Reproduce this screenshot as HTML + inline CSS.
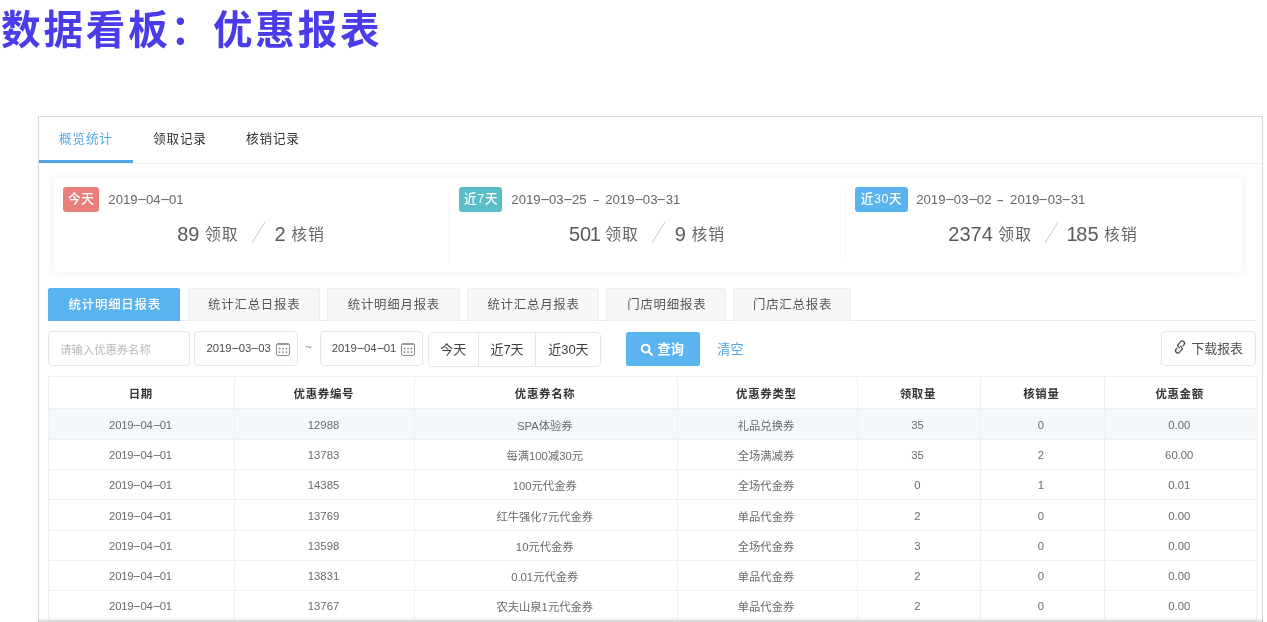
<!DOCTYPE html>
<html lang="zh-CN">
<head>
<meta charset="utf-8">
<title>数据看板：优惠报表</title>
<style>
*{box-sizing:border-box;margin:0;padding:0}
html,body{width:1267px;height:622px;overflow:hidden;background:#fff}
body{position:relative;font-family:"Liberation Sans","Noto Sans CJK SC",sans-serif;color:#666}
#root{position:absolute;left:0;top:0;width:1267px;height:622px;will-change:transform;transform:translateZ(0);filter:blur(.35px)}
i{font-style:normal;display:inline-block;width:.63em;text-align:center;transform:translateY(-.05em) scaleX(2.3)}
b.sp{font-weight:400;display:inline-block;width:18.6px;text-align:center;transform:scaleX(1.7)}
h1{position:absolute;left:1px;top:0;font-size:39.6px;line-height:60px;font-weight:700;color:#4b3ce9;white-space:nowrap;letter-spacing:2.8px}
.panel{position:absolute;left:37.5px;top:116.2px;width:1225.5px;height:520px;border:1px solid #d9d9d9;background:#fff}
.tabhead{position:absolute;left:38.5px;top:117px;width:1223.5px;height:47px;border-bottom:1px solid #f1f1f1}
.tab{position:absolute;top:117px;height:46px;line-height:45.4px;font-size:12.6px;letter-spacing:.8px;text-indent:.8px;color:#333;text-align:center;white-space:nowrap}
.tab.on{color:#52a9e6}
.ink{position:absolute;left:38.5px;top:160.1px;width:94.7px;height:3.3px;background:#4fa6e2}
.card{position:absolute;left:53.5px;top:177.5px;width:1188.5px;height:94.3px;background:#fff;border-radius:3px;box-shadow:0 0 10px rgba(0,0,0,.075)}
.vsep{position:absolute;top:189px;height:73px;width:0;border-left:1px dotted #f0f0f0}
.badge{position:absolute;top:187.3px;height:24.6px;line-height:24.2px;border-radius:3px;color:#fff;font-size:12.6px;letter-spacing:.6px;text-indent:.6px;font-weight:500;text-align:center;white-space:nowrap}
.odate{position:absolute;top:187px;height:25px;line-height:25px;font-size:13.19px;color:#666;white-space:nowrap}
.big{position:absolute;top:211px;height:36px;line-height:36px;width:396px;text-align:center;white-space:nowrap;font-size:20px;color:#5a5a5a}
.big .c{font-size:15.8px;letter-spacing:1px;color:#666;position:relative;top:-1px}
.big .s{display:inline-block;width:15px;margin:0 7.5px 0 13.5px;text-align:center;font-family:"Noto Sans CJK SC",sans-serif;font-weight:300;font-size:22px;line-height:36px;color:#cfcfcf;transform:skewX(-16deg);vertical-align:2px}
.big u{text-decoration:none;margin:0 -1.4px}
.bfade{position:absolute;left:38px;top:617px;width:1224.5px;height:5px;background:linear-gradient(to bottom,rgba(0,0,0,0),rgba(0,0,0,.05) 50%,rgba(0,0,0,.16))}
.stline{position:absolute;left:48px;top:320px;width:1208px;height:1px;background:#ececec}
.st{position:absolute;top:288.2px;height:32.6px;line-height:33.6px;font-size:12.4px;letter-spacing:.8px;text-indent:.8px;color:#555;text-align:center;background:#f7f7f7;border:1px solid #eee;border-radius:2px 2px 0 0;white-space:nowrap}
.st.on{background:#58b3ee;border-color:#58b3ee;color:#fff;font-weight:500}
.inp{position:absolute;top:331.2px;height:35px;line-height:33.6px;border:1px solid #e6e6e6;border-radius:4px;background:#fff;white-space:nowrap}
.ph{font-size:11.3px;color:#b9b9b9;padding-left:11px;line-height:37.2px}
.dt{font-size:11.3px;color:#4a4a4a;padding-left:11.2px}
.dt svg{position:absolute;right:7.3px;top:10.6px}
.tilde{position:absolute;left:301px;top:331px;width:15px;height:35px;line-height:33px;text-align:center;font-size:12px;color:#999}
.bg{position:absolute;top:331.5px;height:35px;line-height:34.8px;border:1px solid #e8e8e8;background:#fff;font-size:13px;color:#3e3e3e;text-align:center;white-space:nowrap}
.q{position:absolute;left:625.5px;top:332.2px;width:74px;height:34.2px;line-height:36px;background:#5ab4f0;border-radius:2.5px;color:#fff;font-size:13.19px;font-weight:700;white-space:nowrap}
.q svg{position:absolute;left:14.6px;top:11.2px}
.q span{position:absolute;left:32px;top:0}
.clr{position:absolute;left:717.3px;top:332px;height:35px;line-height:36.8px;font-size:13.19px;color:#52a8e8;white-space:nowrap}
.dl{position:absolute;left:1161px;top:331px;width:94.7px;height:34.6px;line-height:34px;border:1px solid #e6e6e6;border-radius:4px;font-size:12.9px;color:#505050;white-space:nowrap;background:#fff}
.dl svg{position:absolute;left:10.55px;top:7.1px}
.dl span{position:absolute;left:29.4px;top:0}
table{position:absolute;left:48px;top:376px;width:1208px;border-collapse:collapse;table-layout:fixed;font-size:11.3px;color:#6a6a6a}
th,td{border:1px solid #f0f0f0;text-align:center;padding:0 2px 0 0;white-space:nowrap;overflow:hidden}
th{height:32px;font-size:11.4px;letter-spacing:.7px;text-indent:.7px;font-weight:700;color:#333;background:#fff}
td{height:30.1px;padding-top:1px}
tr.hv td{height:31.3px}
td .d{letter-spacing:-.2px}
tr.hv td{background:#f4f8fb}
</style>
</head>
<body>
<div id="root">
<h1>数据看板：优惠报表</h1>
<div class="panel"></div>
<div class="tabhead"></div>
<div class="tab on" style="left:38px;width:95px">概览统计</div>
<div class="tab" style="left:133px;width:93px">领取记录</div>
<div class="tab" style="left:226px;width:93px">核销记录</div>
<div class="ink"></div>

<div class="card"></div>
<div class="vsep" style="left:448px"></div>
<div class="vsep" style="left:845px"></div>

<div class="badge" style="left:63px;width:36px;background:#e87f7a">今天</div>
<div class="odate" style="left:108.3px"><span class="d">2019<i>-</i>04<i>-</i>01</span></div>
<div class="big" style="left:53px">89 <span class="c">领取</span><span class="s">/</span>2 <span class="c">核销</span></div>

<div class="badge" style="left:459.3px;width:43px;background:#59bec7">近7天</div>
<div class="odate" style="left:511.3px"><span class="d">2019<i>-</i>03<i>-</i>25</span><b class="sp">-</b><span class="d">2019<i>-</i>03<i>-</i>31</span></div>
<div class="big" style="left:449px">50<u>1</u> <span class="c">领取</span><span class="s">/</span>9 <span class="c">核销</span></div>

<div class="badge" style="left:854.8px;width:52.8px;background:#58b3ee">近30天</div>
<div class="odate" style="left:916.2px"><span class="d">2019<i>-</i>03<i>-</i>02</span><b class="sp">-</b><span class="d">2019<i>-</i>03<i>-</i>31</span></div>
<div class="big" style="left:845px">2374 <span class="c">领取</span><span class="s">/</span><u>1</u>85 <span class="c">核销</span></div>

<div class="stline"></div>
<div class="st on" style="left:48.4px;width:132px">统计明细日报表</div>
<div class="st" style="left:187.8px;width:132.2px">统计汇总日报表</div>
<div class="st" style="left:327.4px;width:132.2px">统计明细月报表</div>
<div class="st" style="left:467.1px;width:132.2px">统计汇总月报表</div>
<div class="st" style="left:606.4px;width:120px">门店明细报表</div>
<div class="st" style="left:732.8px;width:118.7px">门店汇总报表</div>

<div class="inp ph" style="left:48.3px;width:141.5px">请输入优惠券名称</div>
<div class="inp dt" style="left:194.2px;width:104.2px"><span class="d">2019<i>-</i>03<i>-</i>03</span><svg width="14" height="13" viewBox="0 0 14 13" fill="none" stroke="#8e8e8e" stroke-width="1"><rect x=".5" y=".6" width="13" height="11.9" rx="1.6"/><path d="M1.2 1.2h11.6" stroke-width="1.3"/><g fill="#7d7d7d" stroke="none"><circle cx="3.55" cy="5.6" r=".85"/><circle cx="7" cy="5.6" r=".85"/><circle cx="10.45" cy="5.6" r=".85"/><circle cx="3.55" cy="9.1" r=".85"/><circle cx="7" cy="9.1" r=".85"/><circle cx="10.45" cy="9.1" r=".85"/></g></svg></div>
<div class="tilde">~</div>
<div class="inp dt" style="left:319.5px;width:103.8px"><span class="d">2019<i>-</i>04<i>-</i>01</span><svg width="14" height="13" viewBox="0 0 14 13" fill="none" stroke="#8e8e8e" stroke-width="1"><rect x=".5" y=".6" width="13" height="11.9" rx="1.6"/><path d="M1.2 1.2h11.6" stroke-width="1.3"/><g fill="#7d7d7d" stroke="none"><circle cx="3.55" cy="5.6" r=".85"/><circle cx="7" cy="5.6" r=".85"/><circle cx="10.45" cy="5.6" r=".85"/><circle cx="3.55" cy="9.1" r=".85"/><circle cx="7" cy="9.1" r=".85"/><circle cx="10.45" cy="9.1" r=".85"/></g></svg></div>
<div class="bg" style="left:428px;width:50.6px;border-radius:4px 0 0 4px">今天</div>
<div class="bg" style="left:477.6px;width:58.8px">近7天</div>
<div class="bg" style="left:535.4px;width:66px;border-radius:0 4px 4px 0">近30天</div>
<div class="q"><svg width="14" height="14" viewBox="0 0 14 14" fill="none" stroke="#fff" stroke-width="2.1"><circle cx="5.6" cy="5.6" r="3.9"/><path d="M8.6 8.6L12 12" stroke-linecap="round"/></svg><span>查询</span></div>
<div class="clr">清空</div>
<div class="dl"><svg width="14" height="16" viewBox="-7 -8 14 16" fill="none" stroke="#4a4a4a" stroke-width="1.4" stroke-linecap="round" stroke-linejoin="round"><g transform="rotate(-50) scale(.9)"><path d="M-1.1 .1L-.5 -3.3H4.66A2.53 2.53 0 0 1 4.66 1.76H3.2"/><path d="M1.1 -.1L.5 3.3H-4.66A2.53 2.53 0 0 1 -4.66 -1.76H-3.2"/></g></svg><span>下载报表</span></div>
<table>
<colgroup><col style="width:186px"><col style="width:180px"><col style="width:262.5px"><col style="width:180px"><col style="width:123px"><col style="width:124px"><col style="width:152.5px"></colgroup>
<thead><tr><th>日期</th><th>优惠券编号</th><th>优惠券名称</th><th>优惠券类型</th><th>领取量</th><th>核销量</th><th>优惠金额</th></tr></thead>
<tbody>
<tr class="hv"><td><span class="d">2019<i>-</i>04<i>-</i>01</span></td><td>12988</td><td>SPA体验券</td><td>礼品兑换券</td><td>35</td><td>0</td><td>0.00</td></tr>
<tr><td><span class="d">2019<i>-</i>04<i>-</i>01</span></td><td>13783</td><td>每满100减30元</td><td>全场满减券</td><td>35</td><td>2</td><td>60.00</td></tr>
<tr><td><span class="d">2019<i>-</i>04<i>-</i>01</span></td><td>14385</td><td>100元代金券</td><td>全场代金券</td><td>0</td><td>1</td><td>0.01</td></tr>
<tr><td><span class="d">2019<i>-</i>04<i>-</i>01</span></td><td>13769</td><td>红牛强化7元代金券</td><td>单品代金券</td><td>2</td><td>0</td><td>0.00</td></tr>
<tr><td><span class="d">2019<i>-</i>04<i>-</i>01</span></td><td>13598</td><td>10元代金券</td><td>全场代金券</td><td>3</td><td>0</td><td>0.00</td></tr>
<tr><td><span class="d">2019<i>-</i>04<i>-</i>01</span></td><td>13831</td><td>0.01元代金券</td><td>单品代金券</td><td>2</td><td>0</td><td>0.00</td></tr>
<tr><td><span class="d">2019<i>-</i>04<i>-</i>01</span></td><td>13767</td><td>农夫山泉1元代金券</td><td>单品代金券</td><td>2</td><td>0</td><td>0.00</td></tr>
</tbody></table>
<div class="bfade"></div>
</div>
</body>
</html>
